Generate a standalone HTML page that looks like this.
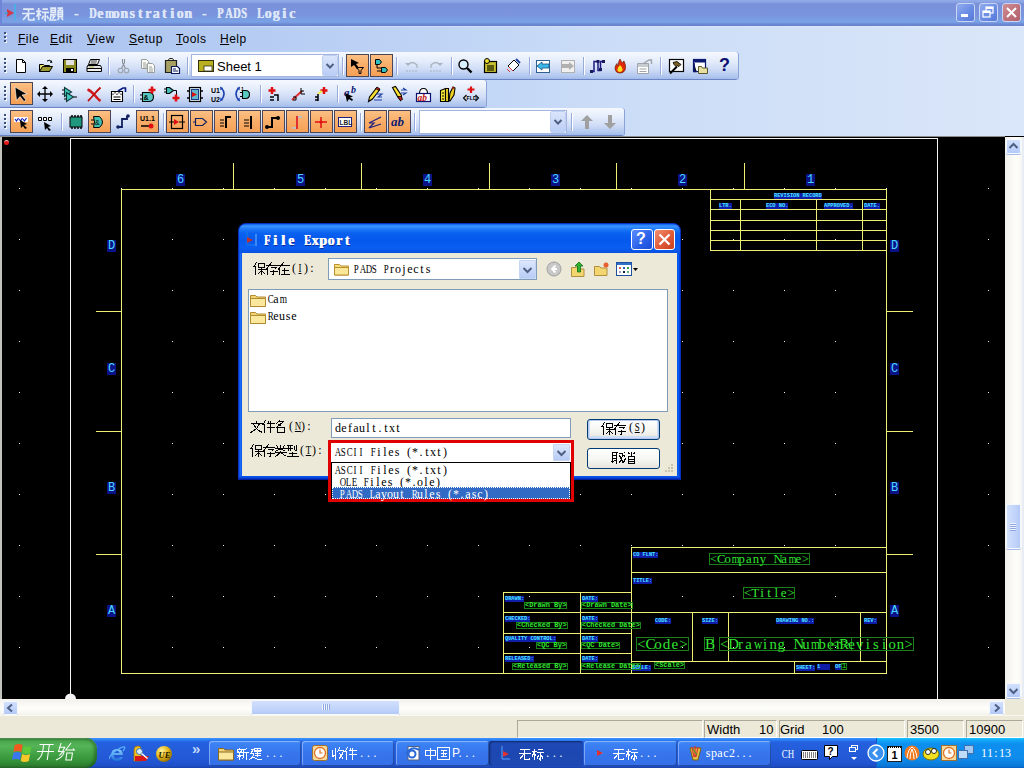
<!DOCTYPE html><html><head><meta charset="utf-8"><style>
*{margin:0;padding:0;box-sizing:border-box}
html,body{width:1024px;height:768px;overflow:hidden;background:#000;font-family:"Liberation Sans",sans-serif}
.a{position:absolute}
svg.a{overflow:visible}
.tb{height:28px;background:linear-gradient(#f5f8fe 0,#e6eefb 30%,#cfdcf6 62%,#b0c6ee 88%,#a2bbec 96%,#6a84c4 96%);border-radius:0 3px 3px 0;box-shadow:1px 0 0 #8aa2d8}
.grip{width:2px;height:2px;background:#39507a;box-shadow:1px 1px 0 #fff}
.ob{width:23px;height:23px;border:1px solid #4a4658;background:linear-gradient(#fbc084,#f8ad68 50%,#f5a056)}
.sep{width:1px;background:#97acd9;box-shadow:1px 0 0 #fff}
.mi{font-size:12px;line-height:14px;color:#000;white-space:pre;letter-spacing:.5px}
.u{text-decoration:underline}
.ms i{display:inline-block;text-align:center;font-style:normal;width:var(--p)}
.p6 i{width:6px}.p8 i{width:8px}
.ms i.n{transform:scaleX(.78)}
.p6 i.U,.p8 i.U{transform:scaleX(.74)}
.ms i.u{text-decoration:underline}
.mono{font-family:"Liberation Mono",monospace}
.lbl{font:bold 5.3px/6px "Liberation Mono",monospace;color:#48e8ff;background:#0e1ca8;white-space:pre}
.grn{font:13px/13px "Liberation Mono",monospace;color:#30e830;border:1px solid #1a801a;white-space:pre}
.grn.s{font-weight:bold}
.cy{font:12px/12px "Liberation Mono",monospace;color:#48d8ff;background:#0a1288;white-space:pre}
.sunk{border:1px solid;border-color:#a9a89c #fff #fff #a9a89c;background:#ece9d8}
.tbb{border-radius:3px;border:1px solid rgba(255,255,255,.25)}
</style></head><body><div class="a " style="left:0px;top:0px;width:1024px;height:26px;background:linear-gradient(#92ace8 0,#8aa4e6 2px,#7890d8 4px,#7a92dc 8px,#7a94dc 15px,#7a9ee2 19px,#7aa2e6 22px,#6e8ad4 24px,#6680cc 26px)"></div>
<div class="a " style="left:0px;top:0px;width:2px;height:26px;background:#6f86d8"></div>
<svg class="a" style="left:4px;top:3px;" width="16" height="18" viewBox="0 0 16 18"><path d="M11 1v16" stroke="#3fb8e8" stroke-width="1.5"/><path d="M3 6l7 4-7 4z" fill="#d23a4a"/><path d="M1 10h3" stroke="#3a9fd0" stroke-width="1.5"/></svg>
<svg class="a" style="left:22px;top:7px;" width="13" height="13" viewBox="0 0 13 13"><path d="M1 2h10M0 6h12M6 2v3M6 6l-5 6M6 6v5q0 1 1 1h4v-2" transform="scale(1.083)" fill="none" stroke="#e4ecfa" stroke-width="1.48"/></svg>
<svg class="a" style="left:36px;top:7px;" width="13" height="13" viewBox="0 0 13 13"><path d="M0 4h5M2.5 1v11M2.5 5l-2 4M2.5 5l2 3M6 2h5M5.5 5h6.5M8.5 5v7l-1-1M7 8l-1.5 3M10 8l1.5 3" transform="scale(1.083)" fill="none" stroke="#e4ecfa" stroke-width="1.48"/></svg>
<svg class="a" style="left:50px;top:7px;" width="13" height="13" viewBox="0 0 13 13"><path d="M1 1h4v4h-4zM1 3h4M0 7h6M3 7v4M3 9h2M1 8l-1 4h6M7 1h5M9.5 1v1.5M7.5 3h4v6h-4zM7.5 5h4M7.5 7h4M8.5 10l-1.5 2M10.5 10l1.5 2" transform="scale(1.083)" fill="none" stroke="#e4ecfa" stroke-width="1.48"/></svg>
<div class="a ms p8" style="left:64px;top:6px;font:bold 14px/16px 'Liberation Serif',serif;color:#dde6f8;white-space:pre;text-shadow:.6px 0 0 #dde6f8"><i>&nbsp;</i><i>-</i><i>&nbsp;</i><i class="U">D</i><i>e</i><i class="n">m</i><i>o</i><i>n</i><i>s</i><i>t</i><i>r</i><i>a</i><i>t</i><i>i</i><i>o</i><i>n</i><i>&nbsp;</i><i>-</i><i>&nbsp;</i><i class="U">P</i><i class="U">A</i><i class="U">D</i><i class="U">S</i><i>&nbsp;</i><i class="U">L</i><i>o</i><i>g</i><i>i</i><i>c</i></div>
<div class="a " style="left:956px;top:3px;width:19px;height:19px;border:1px solid #c9d5f5;border-radius:3px;background:linear-gradient(135deg,#93acef 0,#6e8fe6 50%,#5678d8 100%)"></div>
<div class="a " style="left:979px;top:3px;width:19px;height:19px;border:1px solid #c9d5f5;border-radius:3px;background:linear-gradient(135deg,#93acef 0,#6e8fe6 50%,#5678d8 100%)"></div>
<div class="a " style="left:1002px;top:3px;width:19px;height:19px;border:1px solid #c9d5f5;border-radius:3px;background:linear-gradient(135deg,#cf8e94 0,#bd6f78 60%,#b06070 100%)"></div>
<svg class="a" style="left:956px;top:3px;" width="19" height="19" viewBox="0 0 19 19"><rect x="5" y="11" width="7" height="3" fill="#fff"/></svg>
<svg class="a" style="left:979px;top:3px;" width="19" height="19" viewBox="0 0 19 19"><rect x="7" y="4" width="7" height="6" fill="none" stroke="#fff" stroke-width="1.2"/><rect x="7" y="4" width="7" height="2" fill="#fff"/><rect x="4" y="8" width="7" height="6" fill="#6f8fe4" stroke="#fff" stroke-width="1.2"/><rect x="4" y="8" width="7" height="2" fill="#fff"/></svg>
<svg class="a" style="left:1002px;top:3px;" width="19" height="19" viewBox="0 0 19 19"><path d="M5 5l9 9M14 5l-9 9" stroke="#fff" stroke-width="2"/></svg>
<div class="a " style="left:0px;top:26px;width:1024px;height:110px;background:linear-gradient(90deg,#abc2ef 0,#b3caf2 200px,#bed3f5 420px,#cadcf7 600px,#d2e1f8 800px,#dae6f9 1024px)"></div>
<div class="a " style="left:0px;top:26px;width:1024px;height:1px;background:linear-gradient(90deg,#c0d2f4,#e2ecfb)"></div>
<div class="a grip" style="left:4px;top:32px;width:2px;height:2px;"></div>
<div class="a grip" style="left:4px;top:36px;width:2px;height:2px;"></div>
<div class="a grip" style="left:4px;top:40px;width:2px;height:2px;"></div>
<div class="a mi" style="left:18px;top:32px;"><span class="u">F</span>ile</div>
<div class="a mi" style="left:50px;top:32px;"><span class="u">E</span>dit</div>
<div class="a mi" style="left:87px;top:32px;"><span class="u">V</span>iew</div>
<div class="a mi" style="left:129px;top:32px;"><span class="u">S</span>etup</div>
<div class="a mi" style="left:176px;top:32px;"><span class="u">T</span>ools</div>
<div class="a mi" style="left:220px;top:32px;"><span class="u">H</span>elp</div>
<div class="a tb" style="left:0px;top:52px;width:738px;height:28px;"></div>
<div class="a grip" style="left:4px;top:58px;width:2px;height:2px;"></div>
<div class="a grip" style="left:4px;top:62px;width:2px;height:2px;"></div>
<div class="a grip" style="left:4px;top:66px;width:2px;height:2px;"></div>
<div class="a grip" style="left:4px;top:70px;width:2px;height:2px;"></div>
<div class="a tb" style="left:0px;top:80px;width:486px;height:28px;"></div>
<div class="a grip" style="left:4px;top:86px;width:2px;height:2px;"></div>
<div class="a grip" style="left:4px;top:90px;width:2px;height:2px;"></div>
<div class="a grip" style="left:4px;top:94px;width:2px;height:2px;"></div>
<div class="a grip" style="left:4px;top:98px;width:2px;height:2px;"></div>
<div class="a tb" style="left:0px;top:108px;width:624px;height:28px;"></div>
<div class="a grip" style="left:4px;top:114px;width:2px;height:2px;"></div>
<div class="a grip" style="left:4px;top:118px;width:2px;height:2px;"></div>
<div class="a grip" style="left:4px;top:122px;width:2px;height:2px;"></div>
<div class="a grip" style="left:4px;top:126px;width:2px;height:2px;"></div>
<svg class="a" style="left:13px;top:58px;" width="16" height="16" viewBox="0 0 16 16"><path d="M3.5 1.5h6l3 3v10h-9z" fill="#fff" stroke="#000"/><path d="M9.5 1.5v3h3" fill="none" stroke="#000"/></svg>
<svg class="a" style="left:38px;top:58px;" width="16" height="16" viewBox="0 0 16 16"><path d="M1.5 6.5h4l1 1h5v6h-10z" fill="#e8e070" stroke="#000"/><path d="M1.5 13.5l3-5h10l-3 5z" fill="#9a9a30" stroke="#000"/><path d="M9 3q3-2 5 1" fill="none" stroke="#000"/><path d="M13 2l1.5 2.5-2.5.5" fill="#000"/></svg>
<svg class="a" style="left:62px;top:58px;" width="16" height="16" viewBox="0 0 16 16"><rect x="1.5" y="1.5" width="13" height="13" fill="#8a8a20" stroke="#000"/><rect x="4" y="2" width="8" height="5" fill="#e0e0e0"/><rect x="4" y="10" width="8" height="4" fill="#000"/><rect x="9" y="11" width="2" height="2" fill="#fff"/></svg>
<svg class="a" style="left:86px;top:58px;" width="16" height="16" viewBox="0 0 16 16"><path d="M4.5 1.5h9l-2 5h-9z" fill="#fff" stroke="#000"/><path d="M5 3h6M4.5 5h6" stroke="#000" stroke-width=".8"/><path d="M1.5 7.5h13l1 2v4h-14.5v-4z" fill="#e0e0e0" stroke="#000"/><path d="M1 10.5h14" stroke="#000"/><path d="M3 9h5" stroke="#c0c080" stroke-width="1.5"/><path d="M2 12h12" stroke="#fff"/></svg>
<div class="a sep" style="left:108px;top:57px;width:1px;height:18px;"></div>
<svg class="a" style="left:116px;top:58px;" width="16" height="16" viewBox="0 0 16 16"><circle cx="4.5" cy="12.5" r="2.3" fill="none" stroke="#9ca4ac" stroke-width="1.1"/><circle cx="10.5" cy="12.5" r="2.3" fill="none" stroke="#9ca4ac" stroke-width="1.1"/><path d="M5.5 10.5l3-6V1M9.5 10.5l-3-6V1" stroke="#8a929a" stroke-width="1.1" fill="none"/></svg>
<svg class="a" style="left:140px;top:58px;" width="16" height="16" viewBox="0 0 16 16"><path d="M1.5 1.5h5l2 2v7h-7z" fill="#fbfbf8" stroke="#9a9e9a"/><path d="M3 5h3M3 7h4M3 9h4" stroke="#9a9e9a"/><path d="M7.5 5.5h5l2 2v7h-7z" fill="#fbfbf8" stroke="#9a9e9a"/><path d="M9 9h3M9 11h4M9 13h4" stroke="#9a9e9a"/></svg>
<svg class="a" style="left:164px;top:58px;" width="16" height="16" viewBox="0 0 16 16"><path d="M1.5 2.5h11v12h-11z" fill="#a8a060" stroke="#202020" stroke-width="1.2"/><path d="M4 2.5l1.5-2h3l1.5 2z" fill="#f0f0d0" stroke="#202020"/><path d="M7.5 8.5h6l2 2v5h-8z" fill="#fff" stroke="#0a1a60" stroke-width="1.2"/><path d="M9 11h3M9 13h5" stroke="#0a1a60"/></svg>
<div class="a sep" style="left:187px;top:57px;width:1px;height:18px;"></div>
<div class="a " style="left:191px;top:54px;width:148px;height:23px;background:#fff;border:1px solid #a4b6e0"></div>
<svg class="a" style="left:198px;top:59px;" width="16" height="14" viewBox="0 0 16 14"><rect x=".5" y="1.5" width="15" height="11" fill="#b8b020" stroke="#303010"/><rect x="6" y="7" width="8" height="5" fill="#fff" stroke="#303010" stroke-width=".8"/></svg>
<div class="a " style="left:217px;top:59px;font-size:13px;line-height:16px;color:#000">Sheet 1</div>
<div class="a " style="left:322px;top:55px;width:16px;height:21px;background:linear-gradient(#dbe5fb,#b9cdf6);border:1px solid #c0d0f2;border-radius:2px"></div>
<svg class="a" style="left:322px;top:55px;" width="16" height="21" viewBox="0 0 16 21"><path d="M4.5 9l3.5 3.5 3.5-3.5" fill="none" stroke="#4d6185" stroke-width="2"/></svg>
<div class="a sep" style="left:342px;top:57px;width:1px;height:18px;"></div>
<div class="a ob" style="left:346px;top:54px;width:23px;height:23px;"></div>
<div class="a ob" style="left:370px;top:54px;width:23px;height:23px;"></div>
<svg class="a" style="left:349px;top:58px;" width="16" height="16" viewBox="0 0 16 16"><path d="M2 1l8 4-3 1 3 4-2 1-3-4-3 2z" fill="#000"/><path d="M7.5 9.5h7l-2.5 3v3h-2v-3z" fill="none" stroke="#000"/></svg>
<svg class="a" style="left:373px;top:58px;" width="16" height="16" viewBox="0 0 16 16"><path d="M2.5 1.5h4l2 2.5-2 2.5h-4z" fill="#30c0c0" stroke="#000"/><path d="M8.5 9.5h4l2 2.5-2 2.5h-4z" fill="#30c0c0" stroke="#000"/><path d="M4 6v4h4M4 13h4" stroke="#000" fill="none"/></svg>
<div class="a sep" style="left:396px;top:57px;width:1px;height:18px;"></div>
<svg class="a" style="left:404px;top:58px;" width="16" height="16" viewBox="0 0 16 16"><path d="M4 7q4-5 9 0v3" fill="none" stroke="#a8b4c0" stroke-width="1.3"/><path d="M1 5l3 3 2-3" fill="#a8b4c0"/><path d="M2 13h12" stroke="#a8b4c0" stroke-dasharray="2 1"/></svg>
<svg class="a" style="left:428px;top:58px;" width="16" height="16" viewBox="0 0 16 16"><path d="M12 7q-4-5-9 0v3" fill="none" stroke="#a8b4c0" stroke-width="1.3"/><path d="M15 5l-3 3-2-3" fill="#a8b4c0"/><path d="M2 13h12" stroke="#a8b4c0" stroke-dasharray="2 1"/></svg>
<div class="a sep" style="left:451px;top:57px;width:1px;height:18px;"></div>
<svg class="a" style="left:457px;top:58px;" width="16" height="16" viewBox="0 0 16 16"><circle cx="6.5" cy="6.5" r="4.5" fill="#d8f0ff" stroke="#000" stroke-width="1.4"/><path d="M10 10l4.5 4.5" stroke="#000" stroke-width="2.4"/></svg>
<svg class="a" style="left:482px;top:58px;" width="16" height="16" viewBox="0 0 16 16"><rect x="2.5" y="3.5" width="12" height="11" fill="#c8c030" stroke="#000" stroke-width="1.2"/><rect x="5" y="7" width="7" height="6" fill="#5a5a10"/><circle cx="5" cy="3" r="2.5" fill="#f0e030" stroke="#000"/></svg>
<svg class="a" style="left:505px;top:58px;" width="16" height="16" viewBox="0 0 16 16"><path d="M9 2l5 5-6 6-5-5z" fill="#fff" stroke="#000"/><path d="M4 9l4 4M2 11l3 3" stroke="#e03030"/><path d="M11 1l4 4" stroke="#2040a0" stroke-width="2"/></svg>
<div class="a sep" style="left:529px;top:57px;width:1px;height:18px;"></div>
<svg class="a" style="left:535px;top:58px;" width="16" height="16" viewBox="0 0 16 16"><rect x="1.5" y="2.5" width="13" height="12" fill="#fff" stroke="#306090"/><path d="M2 8l5-4v2h7v4h-7v2z" fill="#38b8e8" stroke="#205080" stroke-width=".8"/></svg>
<svg class="a" style="left:560px;top:58px;" width="16" height="16" viewBox="0 0 16 16"><rect x="1.5" y="2.5" width="13" height="12" fill="#f0f0f0" stroke="#b0b0b0"/><path d="M14 8l-5-4v2h-7v4h7v2z" fill="#b0b0b0"/></svg>
<div class="a sep" style="left:583px;top:57px;width:1px;height:18px;"></div>
<svg class="a" style="left:589px;top:58px;" width="16" height="16" viewBox="0 0 16 16"><path d="M2.5 13.5h2.5V3.5h4v9h2.5V3.5h3" fill="none" stroke="#1a1a80" stroke-width="1.5"/><rect x="1" y="12" width="3" height="3" fill="#1a1a60"/><rect x="7.5" y="2" width="3" height="3" fill="#1a1a60"/><rect x="10" y="10" width="3" height="3" fill="#1a1a60"/><rect x="13" y="2" width="3" height="3" fill="#1a1a60"/></svg>
<svg class="a" style="left:612px;top:58px;" width="16" height="16" viewBox="0 0 16 16"><path d="M8 1q1 3 3 4q0-2 1-2q2 4 1.5 7.5q-1 4.5-5.5 4.5t-5-4.5q0-3 2-5q0 2 1 2.5q0-4 2-7z" fill="#e02808" stroke="#601000" stroke-width=".6"/><path d="M8 7q2 2 2.5 4t-2.5 3q-3 0-2.5-3q.5-2 2.5-4z" fill="#f8e020"/></svg>
<svg class="a" style="left:636px;top:58px;" width="16" height="16" viewBox="0 0 16 16"><path d="M1.5 5.5h11v10h-11z" fill="#fff" stroke="#a0a4a8"/><path d="M2 6h10v3h-10z" fill="#c8ccd0"/><path d="M3.5 11h7M3.5 13.5h7" stroke="#a0a4a8" stroke-width="1.2"/><path d="M8 5l5-3h2.5v4" fill="none" stroke="#a0a4a8" stroke-width="1.4"/></svg>
<div class="a sep" style="left:660px;top:57px;width:1px;height:18px;"></div>
<svg class="a" style="left:668px;top:58px;" width="16" height="16" viewBox="0 0 16 16"><rect x="1.5" y="1.5" width="14" height="12" fill="#fff" stroke="#000" stroke-width="1.2"/><path d="M2 15.5l7-7" stroke="#000" stroke-width="2"/><path d="M5 4.5l4-1 4 3-2 2-2-1-1 1-2-2z" fill="#7a6020" stroke="#000" stroke-width=".8"/></svg>
<svg class="a" style="left:692px;top:58px;" width="16" height="16" viewBox="0 0 16 16"><rect x="1.5" y="1.5" width="12" height="12" fill="#fff" stroke="#0a1a70" stroke-width="1.2"/><rect x="2" y="2" width="11" height="2.5" fill="#0a1a70"/><path d="M2 5v8.5h2.5" stroke="#0a1a70" stroke-width="1.5"/><path d="M6.5 8.5h3l1 1.5h5v5.5h-9z" fill="#e8e0a0" stroke="#585830"/></svg>
<div class="a " style="left:719px;top:55px;font:bold 18px/20px 'Liberation Sans',sans-serif;color:#0a1070">?</div>
<div class="a ob" style="left:10px;top:82px;width:23px;height:23px;"></div>
<svg class="a" style="left:13px;top:86px;" width="16" height="16" viewBox="0 0 16 16"><path d="M2 1l12 7-5 1 4 5-2 1.5-4-5-3.5 4z" fill="#000" stroke="#fff" stroke-width=".6"/></svg>
<svg class="a" style="left:37px;top:86px;" width="16" height="16" viewBox="0 0 16 16"><path d="M8 1v14M1 8h14" stroke="#000" stroke-width="1.3"/><path d="M8 0l3 3h-6zM8 16l3-3h-6zM0 8l3-3v6zM16 8l-3-3v6z" fill="#000"/></svg>
<svg class="a" style="left:61px;top:86px;" width="16" height="16" viewBox="0 0 16 16"><path d="M3.5 1.5l7 4.5-7 4.5z" fill="#40c8c0" stroke="#103838" stroke-width="1.1"/><path d="M5.5 6.5l7 4.5-7 4.5z" fill="#40c8c0" stroke="#103838" stroke-width="1.1"/><path d="M12.5 11h3.5M1 4h2.5M1 8h2.5M3 13h2.5" stroke="#000"/></svg>
<svg class="a" style="left:86px;top:86px;" width="16" height="16" viewBox="0 0 16 16"><path d="M1.5 3.5q3 1 7 5.5t6 6" fill="none" stroke="#d01818" stroke-width="2.6"/><path d="M14.5 1.5q-4 4-7 7.5t-5.5 6" fill="none" stroke="#c01010" stroke-width="1.8"/></svg>
<svg class="a" style="left:110px;top:86px;" width="16" height="16" viewBox="0 0 16 16"><path d="M1.5 5.5h11v10h-11z" fill="#fff" stroke="#000" stroke-width="1.1"/><path d="M2 6h10v3h-10z" fill="#808080"/><path d="M2 6h2v1.5h-2zM6 6h2v1.5h-2zM10 6h2v1.5h-2zM4 7.5h2v1.5h-2zM8 7.5h2v1.5h-2z" fill="#fff"/><path d="M3.5 11h7M3.5 13.5h7" stroke="#000" stroke-width="1.2"/><path d="M8 5l5-3h2.5v4" fill="none" stroke="#0a1a80" stroke-width="1.6"/></svg>
<div class="a sep" style="left:133px;top:85px;width:1px;height:18px;"></div>
<svg class="a" style="left:140px;top:86px;" width="16" height="16" viewBox="0 0 16 16"><path d="M2.5 6.5h6q5 0 5 4.5t-5 4.5h-6z" fill="#58c8c0" stroke="#000" stroke-width="1.1"/><path d="M0 9h2.5M0 13h2.5" stroke="#000"/><text x="3.5" y="14" font-size="7" font-family="Liberation Sans" font-weight="bold" fill="#000">&amp;</text><path d="M12 0.5v7M8.5 4h7" stroke="#e01010" stroke-width="2.6"/></svg>
<svg class="a" style="left:164px;top:86px;" width="16" height="16" viewBox="0 0 16 16"><path d="M2.5 1.5h3l4 3-4 3h-3z" fill="#48c0b8" stroke="#000" stroke-width="1.1"/><path d="M0 3h2.5M0 6h2.5" stroke="#000"/><path d="M9.5 4.5h3v5" fill="none" stroke="#000"/><path d="M12 8.5v7M8.5 12h7" stroke="#e01010" stroke-width="2.6"/></svg>
<svg class="a" style="left:187px;top:86px;" width="16" height="16" viewBox="0 0 16 16"><rect x="2.5" y="1.5" width="11" height="14" fill="#d8ecf0" stroke="#000" stroke-width="1.2"/><rect x="4.5" y="3.5" width="7" height="10" fill="#60b8c8" stroke="#1a3a8a"/><path d="M5 6l5 2.5-5 2.5z" fill="#e01010"/><path d="M0 5h2.5M0 12h2.5M13.5 5h2.5M13.5 12h2.5" stroke="#000" stroke-width="1.5"/></svg>
<svg class="a" style="left:211px;top:86px;" width="16" height="16" viewBox="0 0 16 16"><text x="0" y="7" font-size="7" font-family="Liberation Sans" font-weight="bold" fill="#000">U1</text><text x="0" y="15.5" font-size="7" font-family="Liberation Sans" font-weight="bold" fill="#000">U2</text><path d="M10.5 2q5 5.5 0 12" fill="none" stroke="#1a40b0" stroke-width="1.6"/><path d="M9 0.5l3 1.5-2.5 2.5zM9 15.5l3-1.5-2.5-2.5z" fill="#1a40b0"/></svg>
<svg class="a" style="left:234px;top:86px;" width="16" height="16" viewBox="0 0 16 16"><path d="M8.5 4.5h3q4 0 4 4t-4 4h-3z" fill="#58c8c0" stroke="#000" stroke-width="1.1"/><path d="M6 6.5h2.5M6 10.5h2.5" stroke="#000"/><path d="M4.5 2q-5 6 0 12" fill="none" stroke="#1a40b0" stroke-width="1.6"/><path d="M6 0.5l-3 1.5 2.5 2.5zM6 15.5l-3-1.5 2.5-2.5z" fill="#1a40b0"/><text x="7" y="4.5" font-size="5" font-family="Liberation Sans" font-weight="bold" fill="#000">1</text></svg>
<div class="a sep" style="left:260px;top:85px;width:1px;height:18px;"></div>
<svg class="a" style="left:266px;top:86px;" width="16" height="16" viewBox="0 0 16 16"><path d="M6 1v7M2.5 4.5h7" stroke="#e01010" stroke-width="2.5"/><path d="M8 9h4v6M4 11h4M4 14h4" stroke="#000" stroke-width="1.5" fill="none"/></svg>
<svg class="a" style="left:290px;top:86px;" width="16" height="16" viewBox="0 0 16 16"><path d="M2 14l10-9" stroke="#e03030" stroke-width="2"/><path d="M11 2v6h4M11 5h3M3 11h3v3M3 14h3" stroke="#000" fill="none"/></svg>
<svg class="a" style="left:314px;top:86px;" width="16" height="16" viewBox="0 0 16 16"><path d="M10 1v7M6.5 4.5h7" stroke="#e01010" stroke-width="2.5"/><path d="M4 8l4-3" stroke="#f0f040" stroke-width="2"/><path d="M4 8v7M1 11h3M1 14h3" stroke="#000" stroke-width="1.5" fill="none"/></svg>
<div class="a sep" style="left:337px;top:85px;width:1px;height:18px;"></div>
<svg class="a" style="left:343px;top:86px;" width="16" height="16" viewBox="0 0 16 16"><text x="1" y="10" font-size="11" font-family="Liberation Serif" font-style="italic" font-weight="bold" fill="#0a1470">a</text><text x="8" y="7" font-size="10" font-family="Liberation Serif" font-style="italic" font-weight="bold" fill="#0a1470">b</text><path d="M2 7l2 9 2-3 3 2 1-1.5-3-2 3-1z" fill="#000"/></svg>
<svg class="a" style="left:367px;top:86px;" width="16" height="16" viewBox="0 0 16 16"><path d="M1.5 15.5l1-4.5 7-9 3 2-7 9z" fill="#f8e030" stroke="#000" stroke-width="1.1"/><path d="M8.5 2.5l1.5-1.5 3 2-1 1.5z" fill="#c02020" stroke="#000" stroke-width=".8"/><path d="M9 8h6l-4 3h4M7 14h8" fill="none" stroke="#2040a0" stroke-width="1.1"/></svg>
<svg class="a" style="left:391px;top:86px;" width="16" height="16" viewBox="0 0 16 16"><path d="M1.5 1.5l3-1 6 9-1 5-3-4z" fill="#f8e030" stroke="#000" stroke-width="1.1"/><path d="M6.5 10.5l3 4 2-1-1-3z" fill="#c02020" stroke="#000" stroke-width=".8"/><path d="M10 4h5l-3-2M10 7h5l-3 2" fill="none" stroke="#2040a0" stroke-width="1.1"/></svg>
<svg class="a" style="left:415px;top:86px;" width="16" height="16" viewBox="0 0 16 16"><path d="M4.5 7.5q0-5 4-5t4 5" fill="#fff" stroke="#000" stroke-width="1.1"/><rect x="1.5" y="7.5" width="14" height="8" fill="#fff" stroke="#0a1470" stroke-width="1.2"/><text x="2.5" y="14.5" font-size="9.5" font-family="Liberation Serif" font-style="italic" font-weight="bold" fill="#c01010">ab</text></svg>
<svg class="a" style="left:439px;top:86px;" width="16" height="16" viewBox="0 0 16 16"><path d="M1.5 4.5l5-2v13h-5z" fill="#f8e838" stroke="#000" stroke-width="1.1"/><path d="M3 7h2M3 10h2M3 13h2" stroke="#000"/><path d="M6.5 2.5h3v13h-3z" fill="#e8d028" stroke="#000" stroke-width="1.1"/><path d="M10 15l1-8 3-6 2 1-1 7-4 6z" fill="#f0d020" stroke="#000" stroke-width="1.1"/><path d="M13 1.5l2 1" stroke="#c02020" stroke-width="1.5"/></svg>
<svg class="a" style="left:463px;top:86px;" width="16" height="16" viewBox="0 0 16 16"><path d="M8 0.5v6.5M4.5 3.5h7" stroke="#e01010" stroke-width="2.2"/><path d="M3.5 9l-3 3 3 3M12.5 9l3 3-3 3" fill="none" stroke="#000" stroke-width="1.1"/><text x="3.6" y="14.2" font-size="5.2" font-family="Liberation Sans" font-weight="bold" fill="#000">FLD</text></svg>
<div class="a ob" style="left:10px;top:110px;width:23px;height:23px;"></div>
<svg class="a" style="left:13px;top:114px;" width="16" height="16" viewBox="0 0 16 16"><rect x="1" y="3" width="14" height="5" fill="#fff"/><path d="M2 5l1.5 2 2-3M6 5l1.5 2 2-3M10 5l1.5 2 2-3" stroke="#1020c0" fill="none" stroke-width="1.2"/><path d="M7 6l7 4-3 1 3 3-2 1-2-3-2 2z" fill="#000"/></svg>
<svg class="a" style="left:37px;top:114px;" width="16" height="16" viewBox="0 0 16 16"><path d="M1.5 3.5h3v3h-3zM6.5 3.5h3v3h-3zM11.5 3.5h3v3h-3z" fill="#fff" stroke="#000"/><path d="M7 8l7 4-3 1 3 3-2 1-2-3-2 2z" fill="#000"/></svg>
<div class="a sep" style="left:61px;top:113px;width:1px;height:18px;"></div>
<svg class="a" style="left:68px;top:114px;" width="16" height="16" viewBox="0 0 16 16"><rect x="2" y="3" width="12" height="10" fill="#209880" stroke="#000"/><path d="M4 1v2M7 1v2M10 1v2M13 1v2M4 13v2M7 13v2M10 13v2M13 13v2" stroke="#000" stroke-width="1.5"/></svg>
<div class="a ob" style="left:88px;top:110px;width:23px;height:23px;"></div>
<svg class="a" style="left:91px;top:114px;" width="16" height="16" viewBox="0 0 16 16"><path d="M2.5 2.5h6q6 5.5 0 11h-6q2-5.5 0-11z" fill="#40c0b0" stroke="#000"/><path d="M0 6h3M0 10h3" stroke="#000"/><text x="4" y="11" font-size="7" font-family="Liberation Sans" fill="#000">&amp;</text></svg>
<svg class="a" style="left:116px;top:114px;" width="16" height="16" viewBox="0 0 16 16"><path d="M2 13h4V5h5V2" fill="none" stroke="#102060" stroke-width="1.8"/><circle cx="2" cy="13" r="1.8" fill="#102060"/><circle cx="12" cy="2" r="1.8" fill="#102060"/></svg>
<div class="a ob" style="left:136px;top:110px;width:23px;height:23px;"></div>
<svg class="a" style="left:139px;top:114px;" width="16" height="16" viewBox="0 0 16 16"><text x="1" y="7" font-size="7" font-family="Liberation Sans" font-weight="bold" fill="#000">U1.1</text><path d="M2 12h9" stroke="#000" stroke-width="1.5"/><circle cx="12" cy="12" r="2.5" fill="#e01010"/></svg>
<div class="a sep" style="left:163px;top:113px;width:1px;height:18px;"></div>
<div class="a ob" style="left:166px;top:110px;width:23px;height:23px;"></div>
<div class="a ob" style="left:190px;top:110px;width:23px;height:23px;"></div>
<div class="a ob" style="left:214px;top:110px;width:23px;height:23px;"></div>
<div class="a ob" style="left:238px;top:110px;width:23px;height:23px;"></div>
<div class="a ob" style="left:262px;top:110px;width:23px;height:23px;"></div>
<div class="a ob" style="left:286px;top:110px;width:23px;height:23px;"></div>
<div class="a ob" style="left:310px;top:110px;width:23px;height:23px;"></div>
<div class="a ob" style="left:334px;top:110px;width:23px;height:23px;"></div>
<div class="a ob" style="left:364px;top:110px;width:23px;height:23px;"></div>
<div class="a ob" style="left:388px;top:110px;width:23px;height:23px;"></div>
<svg class="a" style="left:169px;top:114px;" width="16" height="16" viewBox="0 0 16 16"><rect x="2.5" y="1.5" width="11" height="13" fill="none" stroke="#000" stroke-width="1.2"/><path d="M5 5l5 3-5 3z" fill="#e01010"/><path d="M0 8h5M10 8h6" stroke="#000"/></svg>
<svg class="a" style="left:193px;top:114px;" width="16" height="16" viewBox="0 0 16 16"><path d="M2.5 4.5h7l4 3.5-4 3.5h-7z" fill="none" stroke="#102060" stroke-width="1.2"/><path d="M0 8h2" stroke="#102060"/></svg>
<svg class="a" style="left:217px;top:114px;" width="16" height="16" viewBox="0 0 16 16"><path d="M3 6h4M3 9h4M3 12h4" stroke="#000"/><path d="M9 14V3h5" fill="none" stroke="#000" stroke-width="2"/></svg>
<svg class="a" style="left:241px;top:114px;" width="16" height="16" viewBox="0 0 16 16"><path d="M3 6h5M3 9h5M3 12h5" stroke="#000"/><path d="M10 2v13" stroke="#000" stroke-width="2"/></svg>
<svg class="a" style="left:265px;top:114px;" width="16" height="16" viewBox="0 0 16 16"><path d="M2 13h5V4h6" fill="none" stroke="#000" stroke-width="2"/><circle cx="2" cy="13" r="2" fill="#000"/><circle cx="13" cy="4" r="2" fill="#000"/></svg>
<svg class="a" style="left:289px;top:114px;" width="16" height="16" viewBox="0 0 16 16"><path d="M8 2v13" stroke="#e03030" stroke-width="2"/><path d="M3 14h4M9 3h4" stroke="#c0c0c0" stroke-width="2"/></svg>
<svg class="a" style="left:313px;top:114px;" width="16" height="16" viewBox="0 0 16 16"><path d="M2 8h12" stroke="#e01010" stroke-width="1.5"/><path d="M8 3v11" stroke="#e01010" stroke-width="1.5"/><circle cx="8" cy="8" r="1.5" fill="#e01010"/></svg>
<svg class="a" style="left:337px;top:114px;" width="16" height="16" viewBox="0 0 16 16"><rect x="1.5" y="3.5" width="13" height="9" fill="#fff" stroke="#202080"/><text x="2.5" y="11" font-size="6.5" font-family="Liberation Sans" font-weight="bold" fill="#202020">LBL</text></svg>
<div class="a sep" style="left:360px;top:113px;width:1px;height:18px;"></div>
<svg class="a" style="left:367px;top:114px;" width="16" height="16" viewBox="0 0 16 16"><path d="M2 14l12-4M2 9l12-6M2 9h5l-5 5" fill="none" stroke="#202080" stroke-width="1.2"/></svg>
<svg class="a" style="left:391px;top:114px;" width="16" height="16" viewBox="0 0 16 16"><text x="0" y="12" font-size="13" font-family="Liberation Serif" font-style="italic" font-weight="bold" fill="#102070">ab</text></svg>
<div class="a sep" style="left:414px;top:113px;width:1px;height:18px;"></div>
<div class="a " style="left:419px;top:110px;width:148px;height:24px;background:#fff;border:1px solid #a4b6e0"></div>
<div class="a " style="left:550px;top:111px;width:16px;height:22px;background:linear-gradient(#dbe5fb,#b9cdf6);border:1px solid #c0d0f2;border-radius:2px"></div>
<svg class="a" style="left:550px;top:111px;" width="16" height="22" viewBox="0 0 16 22"><path d="M4.5 9l3.5 3.5 3.5-3.5" fill="none" stroke="#4d6185" stroke-width="2"/></svg>
<div class="a sep" style="left:571px;top:113px;width:1px;height:18px;"></div>
<svg class="a" style="left:579px;top:114px;" width="16" height="16" viewBox="0 0 16 16"><path d="M8 1l6 6h-4v8h-4v-8h-4z" fill="#a0a0a0"/></svg>
<svg class="a" style="left:602px;top:114px;" width="16" height="16" viewBox="0 0 16 16"><path d="M8 15l6-6h-4v-8h-4v8h-4z" fill="#a0a0a0"/></svg>
<div class="a " style="left:0px;top:136px;width:1005px;height:563px;background:#000"></div>
<div class="a " style="left:0px;top:136px;width:1005px;height:1px;background:#8c8c8c"></div>
<div class="a " style="left:4px;top:140px;width:5px;height:5px;background:#e81818;border-radius:50%;border-top:1px solid #f0c0c0"></div>
<div class="a " style="left:0px;top:137px;width:2px;height:562px;background:#c4c4bc"></div>
<svg class="a" style="left:0px;top:137px;" width="1005" height="562" viewBox="0 0 1005 562"><g fill="#f0f0f0"><rect x="19" y="51" width="1" height="1"/><rect x="70" y="51" width="1" height="1"/><rect x="121" y="51" width="1" height="1"/><rect x="172" y="51" width="1" height="1"/><rect x="223" y="51" width="1" height="1"/><rect x="274" y="51" width="1" height="1"/><rect x="325" y="51" width="1" height="1"/><rect x="376" y="51" width="1" height="1"/><rect x="427" y="51" width="1" height="1"/><rect x="478" y="51" width="1" height="1"/><rect x="529" y="51" width="1" height="1"/><rect x="580" y="51" width="1" height="1"/><rect x="631" y="51" width="1" height="1"/><rect x="682" y="51" width="1" height="1"/><rect x="733" y="51" width="1" height="1"/><rect x="784" y="51" width="1" height="1"/><rect x="835" y="51" width="1" height="1"/><rect x="886" y="51" width="1" height="1"/><rect x="937" y="51" width="1" height="1"/><rect x="988" y="51" width="1" height="1"/><rect x="19" y="102" width="1" height="1"/><rect x="70" y="102" width="1" height="1"/><rect x="121" y="102" width="1" height="1"/><rect x="172" y="102" width="1" height="1"/><rect x="223" y="102" width="1" height="1"/><rect x="274" y="102" width="1" height="1"/><rect x="325" y="102" width="1" height="1"/><rect x="376" y="102" width="1" height="1"/><rect x="427" y="102" width="1" height="1"/><rect x="478" y="102" width="1" height="1"/><rect x="529" y="102" width="1" height="1"/><rect x="580" y="102" width="1" height="1"/><rect x="631" y="102" width="1" height="1"/><rect x="682" y="102" width="1" height="1"/><rect x="733" y="102" width="1" height="1"/><rect x="784" y="102" width="1" height="1"/><rect x="835" y="102" width="1" height="1"/><rect x="886" y="102" width="1" height="1"/><rect x="937" y="102" width="1" height="1"/><rect x="988" y="102" width="1" height="1"/><rect x="19" y="153" width="1" height="1"/><rect x="70" y="153" width="1" height="1"/><rect x="121" y="153" width="1" height="1"/><rect x="172" y="153" width="1" height="1"/><rect x="223" y="153" width="1" height="1"/><rect x="274" y="153" width="1" height="1"/><rect x="325" y="153" width="1" height="1"/><rect x="376" y="153" width="1" height="1"/><rect x="427" y="153" width="1" height="1"/><rect x="478" y="153" width="1" height="1"/><rect x="529" y="153" width="1" height="1"/><rect x="580" y="153" width="1" height="1"/><rect x="631" y="153" width="1" height="1"/><rect x="682" y="153" width="1" height="1"/><rect x="733" y="153" width="1" height="1"/><rect x="784" y="153" width="1" height="1"/><rect x="835" y="153" width="1" height="1"/><rect x="886" y="153" width="1" height="1"/><rect x="937" y="153" width="1" height="1"/><rect x="988" y="153" width="1" height="1"/><rect x="19" y="204" width="1" height="1"/><rect x="70" y="204" width="1" height="1"/><rect x="121" y="204" width="1" height="1"/><rect x="172" y="204" width="1" height="1"/><rect x="223" y="204" width="1" height="1"/><rect x="274" y="204" width="1" height="1"/><rect x="325" y="204" width="1" height="1"/><rect x="376" y="204" width="1" height="1"/><rect x="427" y="204" width="1" height="1"/><rect x="478" y="204" width="1" height="1"/><rect x="529" y="204" width="1" height="1"/><rect x="580" y="204" width="1" height="1"/><rect x="631" y="204" width="1" height="1"/><rect x="682" y="204" width="1" height="1"/><rect x="733" y="204" width="1" height="1"/><rect x="784" y="204" width="1" height="1"/><rect x="835" y="204" width="1" height="1"/><rect x="886" y="204" width="1" height="1"/><rect x="937" y="204" width="1" height="1"/><rect x="988" y="204" width="1" height="1"/><rect x="19" y="255" width="1" height="1"/><rect x="70" y="255" width="1" height="1"/><rect x="121" y="255" width="1" height="1"/><rect x="172" y="255" width="1" height="1"/><rect x="223" y="255" width="1" height="1"/><rect x="274" y="255" width="1" height="1"/><rect x="325" y="255" width="1" height="1"/><rect x="376" y="255" width="1" height="1"/><rect x="427" y="255" width="1" height="1"/><rect x="478" y="255" width="1" height="1"/><rect x="529" y="255" width="1" height="1"/><rect x="580" y="255" width="1" height="1"/><rect x="631" y="255" width="1" height="1"/><rect x="682" y="255" width="1" height="1"/><rect x="733" y="255" width="1" height="1"/><rect x="784" y="255" width="1" height="1"/><rect x="835" y="255" width="1" height="1"/><rect x="886" y="255" width="1" height="1"/><rect x="937" y="255" width="1" height="1"/><rect x="988" y="255" width="1" height="1"/><rect x="19" y="306" width="1" height="1"/><rect x="70" y="306" width="1" height="1"/><rect x="121" y="306" width="1" height="1"/><rect x="172" y="306" width="1" height="1"/><rect x="223" y="306" width="1" height="1"/><rect x="274" y="306" width="1" height="1"/><rect x="325" y="306" width="1" height="1"/><rect x="376" y="306" width="1" height="1"/><rect x="427" y="306" width="1" height="1"/><rect x="478" y="306" width="1" height="1"/><rect x="529" y="306" width="1" height="1"/><rect x="580" y="306" width="1" height="1"/><rect x="631" y="306" width="1" height="1"/><rect x="682" y="306" width="1" height="1"/><rect x="733" y="306" width="1" height="1"/><rect x="784" y="306" width="1" height="1"/><rect x="835" y="306" width="1" height="1"/><rect x="886" y="306" width="1" height="1"/><rect x="937" y="306" width="1" height="1"/><rect x="988" y="306" width="1" height="1"/><rect x="19" y="357" width="1" height="1"/><rect x="70" y="357" width="1" height="1"/><rect x="121" y="357" width="1" height="1"/><rect x="172" y="357" width="1" height="1"/><rect x="223" y="357" width="1" height="1"/><rect x="274" y="357" width="1" height="1"/><rect x="325" y="357" width="1" height="1"/><rect x="376" y="357" width="1" height="1"/><rect x="427" y="357" width="1" height="1"/><rect x="478" y="357" width="1" height="1"/><rect x="529" y="357" width="1" height="1"/><rect x="580" y="357" width="1" height="1"/><rect x="631" y="357" width="1" height="1"/><rect x="682" y="357" width="1" height="1"/><rect x="733" y="357" width="1" height="1"/><rect x="784" y="357" width="1" height="1"/><rect x="835" y="357" width="1" height="1"/><rect x="886" y="357" width="1" height="1"/><rect x="937" y="357" width="1" height="1"/><rect x="988" y="357" width="1" height="1"/><rect x="19" y="408" width="1" height="1"/><rect x="70" y="408" width="1" height="1"/><rect x="121" y="408" width="1" height="1"/><rect x="172" y="408" width="1" height="1"/><rect x="223" y="408" width="1" height="1"/><rect x="274" y="408" width="1" height="1"/><rect x="325" y="408" width="1" height="1"/><rect x="376" y="408" width="1" height="1"/><rect x="427" y="408" width="1" height="1"/><rect x="478" y="408" width="1" height="1"/><rect x="529" y="408" width="1" height="1"/><rect x="580" y="408" width="1" height="1"/><rect x="631" y="408" width="1" height="1"/><rect x="682" y="408" width="1" height="1"/><rect x="733" y="408" width="1" height="1"/><rect x="784" y="408" width="1" height="1"/><rect x="835" y="408" width="1" height="1"/><rect x="886" y="408" width="1" height="1"/><rect x="937" y="408" width="1" height="1"/><rect x="988" y="408" width="1" height="1"/><rect x="19" y="459" width="1" height="1"/><rect x="70" y="459" width="1" height="1"/><rect x="121" y="459" width="1" height="1"/><rect x="172" y="459" width="1" height="1"/><rect x="223" y="459" width="1" height="1"/><rect x="274" y="459" width="1" height="1"/><rect x="325" y="459" width="1" height="1"/><rect x="376" y="459" width="1" height="1"/><rect x="427" y="459" width="1" height="1"/><rect x="478" y="459" width="1" height="1"/><rect x="529" y="459" width="1" height="1"/><rect x="580" y="459" width="1" height="1"/><rect x="631" y="459" width="1" height="1"/><rect x="682" y="459" width="1" height="1"/><rect x="733" y="459" width="1" height="1"/><rect x="784" y="459" width="1" height="1"/><rect x="835" y="459" width="1" height="1"/><rect x="886" y="459" width="1" height="1"/><rect x="937" y="459" width="1" height="1"/><rect x="988" y="459" width="1" height="1"/><rect x="19" y="510" width="1" height="1"/><rect x="70" y="510" width="1" height="1"/><rect x="121" y="510" width="1" height="1"/><rect x="172" y="510" width="1" height="1"/><rect x="223" y="510" width="1" height="1"/><rect x="274" y="510" width="1" height="1"/><rect x="325" y="510" width="1" height="1"/><rect x="376" y="510" width="1" height="1"/><rect x="427" y="510" width="1" height="1"/><rect x="478" y="510" width="1" height="1"/><rect x="529" y="510" width="1" height="1"/><rect x="580" y="510" width="1" height="1"/><rect x="631" y="510" width="1" height="1"/><rect x="682" y="510" width="1" height="1"/><rect x="733" y="510" width="1" height="1"/><rect x="784" y="510" width="1" height="1"/><rect x="835" y="510" width="1" height="1"/><rect x="886" y="510" width="1" height="1"/><rect x="937" y="510" width="1" height="1"/><rect x="988" y="510" width="1" height="1"/></g></svg>
<div class="a " style="left:70px;top:138px;width:868px;height:1px;background:#f4f4f4"></div>
<div class="a " style="left:70px;top:138px;width:1px;height:561px;background:#f4f4f4"></div>
<div class="a " style="left:937px;top:138px;width:1px;height:561px;background:#f4f4f4"></div>
<svg class="a" style="left:64px;top:693px;" width="13" height="6" viewBox="0 0 13 6"><path d="M1 6a5.5 5.5 0 0 1 11 0z" fill="#f4f4f4"/></svg>
<div class="a " style="left:121px;top:189px;width:766px;height:1px;background:#eeee74"></div>
<div class="a " style="left:121px;top:673px;width:766px;height:1px;background:#eeee74"></div>
<div class="a " style="left:121px;top:189px;width:1px;height:485px;background:#eeee74"></div>
<div class="a " style="left:886px;top:189px;width:1px;height:485px;background:#eeee74"></div>
<div class="a " style="left:233px;top:163px;width:1px;height:27px;background:#eeee74"></div>
<div class="a " style="left:361px;top:163px;width:1px;height:27px;background:#eeee74"></div>
<div class="a " style="left:489px;top:163px;width:1px;height:27px;background:#eeee74"></div>
<div class="a " style="left:616px;top:163px;width:1px;height:27px;background:#eeee74"></div>
<div class="a " style="left:744px;top:163px;width:1px;height:27px;background:#eeee74"></div>
<div class="a " style="left:96px;top:311px;width:26px;height:1px;background:#eeee74"></div>
<div class="a " style="left:886px;top:311px;width:27px;height:1px;background:#eeee74"></div>
<div class="a " style="left:96px;top:431px;width:26px;height:1px;background:#eeee74"></div>
<div class="a " style="left:886px;top:431px;width:27px;height:1px;background:#eeee74"></div>
<div class="a " style="left:96px;top:554px;width:26px;height:1px;background:#eeee74"></div>
<div class="a " style="left:886px;top:554px;width:27px;height:1px;background:#eeee74"></div>
<div class="a cy" style="left:176px;top:174px;width:9px;height:12px;text-align:center">6</div>
<div class="a cy" style="left:296px;top:174px;width:9px;height:12px;text-align:center">5</div>
<div class="a cy" style="left:423px;top:174px;width:9px;height:12px;text-align:center">4</div>
<div class="a cy" style="left:551px;top:174px;width:9px;height:12px;text-align:center">3</div>
<div class="a cy" style="left:678px;top:174px;width:9px;height:12px;text-align:center">2</div>
<div class="a cy" style="left:806px;top:174px;width:9px;height:12px;text-align:center">1</div>
<div class="a cy" style="left:107px;top:240px;width:9px;height:12px;text-align:center">D</div>
<div class="a cy" style="left:890px;top:240px;width:9px;height:12px;text-align:center">D</div>
<div class="a cy" style="left:107px;top:363px;width:9px;height:12px;text-align:center">C</div>
<div class="a cy" style="left:890px;top:363px;width:9px;height:12px;text-align:center">C</div>
<div class="a cy" style="left:107px;top:482px;width:9px;height:12px;text-align:center">B</div>
<div class="a cy" style="left:890px;top:482px;width:9px;height:12px;text-align:center">B</div>
<div class="a cy" style="left:107px;top:605px;width:9px;height:12px;text-align:center">A</div>
<div class="a cy" style="left:890px;top:605px;width:9px;height:12px;text-align:center">A</div>
<div class="a " style="left:710px;top:199px;width:177px;height:1px;background:#eeee74"></div>
<div class="a " style="left:710px;top:209px;width:177px;height:1px;background:#eeee74"></div>
<div class="a " style="left:710px;top:220px;width:177px;height:1px;background:#eeee74"></div>
<div class="a " style="left:710px;top:230px;width:177px;height:1px;background:#eeee74"></div>
<div class="a " style="left:710px;top:240px;width:177px;height:1px;background:#eeee74"></div>
<div class="a " style="left:710px;top:250px;width:177px;height:1px;background:#eeee74"></div>
<div class="a " style="left:710px;top:189px;width:1px;height:62px;background:#eeee74"></div>
<div class="a " style="left:740px;top:199px;width:1px;height:52px;background:#eeee74"></div>
<div class="a " style="left:816px;top:199px;width:1px;height:52px;background:#eeee74"></div>
<div class="a " style="left:862px;top:199px;width:1px;height:52px;background:#eeee74"></div>
<div class="a lbl" style="left:774px;top:193px">REVISION RECORD</div>
<div class="a lbl" style="left:719px;top:203px">LTR.</div>
<div class="a lbl" style="left:766px;top:203px">ECO NO.</div>
<div class="a lbl" style="left:824px;top:203px">APPROVED.</div>
<div class="a lbl" style="left:864px;top:203px">DATE.</div>
<div class="a " style="left:631px;top:547px;width:256px;height:1px;background:#eeee74"></div>
<div class="a " style="left:631px;top:572px;width:256px;height:1px;background:#eeee74"></div>
<div class="a " style="left:631px;top:612px;width:256px;height:1px;background:#eeee74"></div>
<div class="a " style="left:631px;top:661px;width:256px;height:1px;background:#eeee74"></div>
<div class="a " style="left:631px;top:547px;width:1px;height:127px;background:#eeee74"></div>
<div class="a " style="left:692px;top:612px;width:1px;height:50px;background:#eeee74"></div>
<div class="a " style="left:728px;top:612px;width:1px;height:50px;background:#eeee74"></div>
<div class="a " style="left:860px;top:612px;width:1px;height:50px;background:#eeee74"></div>
<div class="a " style="left:794px;top:661px;width:1px;height:13px;background:#eeee74"></div>
<div class="a " style="left:503px;top:592px;width:129px;height:1px;background:#eeee74"></div>
<div class="a " style="left:503px;top:612px;width:129px;height:1px;background:#eeee74"></div>
<div class="a " style="left:503px;top:633px;width:129px;height:1px;background:#eeee74"></div>
<div class="a " style="left:503px;top:653px;width:129px;height:1px;background:#eeee74"></div>
<div class="a " style="left:503px;top:592px;width:1px;height:82px;background:#eeee74"></div>
<div class="a " style="left:580px;top:592px;width:1px;height:82px;background:#eeee74"></div>
<div class="a lbl" style="left:633px;top:552px">CO FLNT:</div>
<div class="a lbl" style="left:633px;top:578px">TITLE:</div>
<div class="a lbl" style="left:655px;top:618px">CODE:</div>
<div class="a lbl" style="left:702px;top:618px">SIZE:</div>
<div class="a lbl" style="left:776px;top:618px">DRAWING NO.:</div>
<div class="a lbl" style="left:864px;top:618px">REV:</div>
<div class="a lbl" style="left:632px;top:665px">SCALE:</div>
<div class="a lbl" style="left:796px;top:665px">SHEET:</div>
<div class="a lbl" style="left:505px;top:596px">DRAWN:</div>
<div class="a lbl" style="left:582px;top:596px">DATE:</div>
<div class="a lbl" style="left:505px;top:616px">CHECKED:</div>
<div class="a lbl" style="left:582px;top:616px">DATE:</div>
<div class="a lbl" style="left:505px;top:636px">QUALITY CONTROL:</div>
<div class="a lbl" style="left:582px;top:636px">DATE:</div>
<div class="a lbl" style="left:505px;top:656px">RELEASED:</div>
<div class="a lbl" style="left:582px;top:656px">DATE:</div>
<div class="a grn ms" style="left:709px;top:553px;font-family:Liberation Serif,serif;font-size:12.7px;line-height:10px;--p:7.07px;"><i>&lt;</i><i class="U">C</i><i>o</i><i class="n">m</i><i>p</i><i>a</i><i>n</i><i>y</i><i>&nbsp;</i><i class="U">N</i><i>a</i><i class="n">m</i><i>e</i><i>&gt;</i></div>
<div class="a grn ms" style="left:743px;top:587px;font-family:Liberation Serif,serif;font-size:13.0px;line-height:10px;--p:7.2px;"><i>&lt;</i><i class="U">T</i><i>i</i><i>t</i><i>l</i><i>e</i><i>&gt;</i></div>
<div class="a grn ms" style="left:636px;top:637px;font-family:Liberation Serif,serif;font-size:15.1px;line-height:12px;--p:8.45px;"><i>&lt;</i><i class="U">C</i><i>o</i><i>d</i><i>e</i><i>&gt;</i></div>
<div class="a grn ms" style="left:704px;top:637px;font-family:Liberation Serif,serif;font-size:15.1px;line-height:12px;--p:8.45px;"><i class="U">B</i></div>
<div class="a grn ms" style="left:719px;top:637px;font-family:Liberation Serif,serif;font-size:14.7px;line-height:12px;--p:8.18px;"><i>&lt;</i><i class="U">D</i><i>r</i><i>a</i><i class="n">w</i><i>i</i><i>n</i><i>g</i><i>&nbsp;</i><i class="U">N</i><i>u</i><i class="n">m</i><i>b</i><i>e</i><i>r</i><i>&gt;</i></div>
<div class="a grn ms" style="left:830px;top:637px;font-family:Liberation Serif,serif;font-size:14.7px;line-height:12px;--p:8.18px;"><i>&lt;</i><i class="U">R</i><i>e</i><i>v</i><i>i</i><i>s</i><i>i</i><i>o</i><i>n</i><i>&gt;</i></div>
<div class="a grn s" style="left:654px;top:662px;font-size:6.9px;line-height:5px;">&lt;Scale&gt;</div>
<div class="a grn s" style="left:524px;top:602px;font-size:6.9px;line-height:5px;">&lt;Drawn By&gt;</div>
<div class="a grn s" style="left:581px;top:602px;font-size:6.9px;line-height:5px;">&lt;Drawn Date&gt;</div>
<div class="a grn s" style="left:516px;top:622px;font-size:6.9px;line-height:5px;">&lt;Checked By&gt;</div>
<div class="a grn s" style="left:581px;top:622px;font-size:6.9px;line-height:5px;">&lt;Checked Date&gt;</div>
<div class="a grn s" style="left:536px;top:642px;font-size:6.9px;line-height:5px;">&lt;QC By&gt;</div>
<div class="a grn s" style="left:581px;top:642px;font-size:6.9px;line-height:5px;">&lt;QC Date&gt;</div>
<div class="a grn s" style="left:512px;top:663px;font-size:6.9px;line-height:5px;">&lt;Released By&gt;</div>
<div class="a grn s" style="left:581px;top:663px;font-size:6.9px;line-height:5px;">&lt;Release Date&gt;</div>
<div class="a lbl" style="left:817px;top:664px">1   </div>
<div class="a lbl" style="left:835px;top:664px">OF</div>
<div class="a grn" style="left:841px;top:663px;font-size:6.9px;line-height:5px">1</div>
<div class="a " style="left:1005px;top:137px;width:19px;height:562px;background:linear-gradient(90deg,#f3f1ec,#fefefb 60%,#f4f3ee)"></div>
<div class="a " style="left:1022px;top:137px;width:2px;height:562px;background:#e8ecf4"></div>
<div class="a " style="left:1006px;top:139px;width:15px;height:15px;background:linear-gradient(180deg,#d2e0fd,#bfd2fa 70%,#b2c8f6);border:1px solid #f4f8ff;border-radius:2px;box-shadow:0 1px 0 #a8bce8"></div>
<svg class="a" style="left:1006px;top:139px;" width="15" height="15" viewBox="0 0 15 15"><path d="M3.5 9l4-4 4 4" fill="none" stroke="#4d6185" stroke-width="2"/></svg>
<div class="a " style="left:1006px;top:683px;width:15px;height:15px;background:linear-gradient(180deg,#d2e0fd,#bfd2fa 70%,#b2c8f6);border:1px solid #f4f8ff;border-radius:2px;box-shadow:0 1px 0 #a8bce8"></div>
<svg class="a" style="left:1006px;top:683px;" width="15" height="15" viewBox="0 0 15 15"><path d="M3.5 6l4 4 4-4" fill="none" stroke="#4d6185" stroke-width="2"/></svg>
<div class="a " style="left:1006px;top:504px;width:15px;height:45px;background:linear-gradient(90deg,#d2e0fd,#bfd2fa 70%,#b2c8f6);border:1px solid #f4f8ff;border-radius:2px;box-shadow:0 1px 0 #a8bce8"></div>
<svg class="a" style="left:1006px;top:504px;" width="15" height="45" viewBox="0 0 15 45"><path d="M4 19.5h6M4 21.5h6M4 23.5h6M4 25.5h6" stroke="#eef3fd"/><path d="M4 20.5h6M4 22.5h6M4 24.5h6M4 26.5h6" stroke="#8fa8e0"/></svg>
<div class="a " style="left:0px;top:699px;width:1005px;height:16px;background:linear-gradient(#f3f1ec,#fefefb 60%,#f4f3ee)"></div>
<div class="a " style="left:3px;top:701px;width:15px;height:14px;background:linear-gradient(180deg,#d2e0fd,#bfd2fa 70%,#b2c8f6);border:1px solid #f4f8ff;border-radius:2px;box-shadow:0 1px 0 #a8bce8"></div>
<svg class="a" style="left:3px;top:701px;" width="15" height="14" viewBox="0 0 15 14"><path d="M9 3.5l-4 3.5 4 3.5" fill="none" stroke="#4d6185" stroke-width="2"/></svg>
<div class="a " style="left:989px;top:701px;width:15px;height:14px;background:linear-gradient(180deg,#d2e0fd,#bfd2fa 70%,#b2c8f6);border:1px solid #f4f8ff;border-radius:2px;box-shadow:0 1px 0 #a8bce8"></div>
<svg class="a" style="left:989px;top:701px;" width="15" height="14" viewBox="0 0 15 14"><path d="M6 3.5l4 3.5-4 3.5" fill="none" stroke="#4d6185" stroke-width="2"/></svg>
<div class="a " style="left:251px;top:700px;width:149px;height:15px;background:linear-gradient(180deg,#d2e0fd,#bfd2fa 70%,#b2c8f6);border:1px solid #f4f8ff;border-radius:2px;box-shadow:0 1px 0 #a8bce8"></div>
<svg class="a" style="left:251px;top:700px;" width="149" height="15" viewBox="0 0 149 15"><path d="M71.5 4v6M73.5 4v6M75.5 4v6M77.5 4v6" stroke="#eef3fd"/><path d="M72.5 4v6M74.5 4v6M76.5 4v6M78.5 4v6" stroke="#8fa8e0"/></svg>
<div class="a " style="left:1005px;top:699px;width:19px;height:16px;background:#ece9d8"></div>
<div class="a " style="left:238px;top:223px;width:443px;height:257px;background:#0a3ee0;border-radius:8px 8px 0 0;border:1px solid #0831c0;border-bottom-color:#001ea0"></div>
<div class="a " style="left:239px;top:224px;width:441px;height:29px;border-radius:7px 7px 0 0;background:linear-gradient(#0a5ff0 0,#3d95ff 2px,#1e7af8 5px,#0a62f0 9px,#0558ec 16px,#0a5ef0 24px,#0850e0 29px)"></div>
<div class="a " style="left:239px;top:253px;width:3px;height:226px;background:linear-gradient(90deg,#0a4ae8,#166cf5,#0a52e8)"></div>
<div class="a " style="left:677px;top:253px;width:3px;height:226px;background:linear-gradient(90deg,#0a52e8,#0a5cf0,#0036c8)"></div>
<div class="a " style="left:239px;top:476px;width:441px;height:3px;background:linear-gradient(#0a5cf0,#0848e0,#0030b8)"></div>
<svg class="a" style="left:243px;top:231px;" width="16" height="16" viewBox="0 0 16 16"><path d="M4 1v13h8" fill="none" stroke="#1a7ae8" stroke-width="1"/><path d="M4 6l6 3-6 3z" fill="#c03030"/><path d="M13 3v12" stroke="#70b8ff"/></svg>
<div class="a ms p8" style="left:263px;top:233px;font:bold 14px/16px 'Liberation Serif',serif;color:#fff;text-shadow:.6px 0 0 #fff,1px 1px 0 #0a2a90;white-space:pre"><i class="U">F</i><i>i</i><i>l</i><i>e</i><i>&nbsp;</i><i class="U">E</i><i>x</i><i>p</i><i>o</i><i>r</i><i>t</i></div>
<div class="a " style="left:631px;top:229px;width:22px;height:21px;border:1px solid #fff;border-radius:3px;background:linear-gradient(135deg,#5a8cff,#2a60e8 60%,#1c4cd8)"></div>
<div class="a " style="left:636px;top:229px;font:bold 16px/20px 'Liberation Sans',sans-serif;color:#fff">?</div>
<div class="a " style="left:654px;top:229px;width:21px;height:21px;border:1px solid #fff;border-radius:3px;background:linear-gradient(135deg,#f09070,#e05a38 55%,#c8401f)"></div>
<svg class="a" style="left:654px;top:229px;" width="21" height="21" viewBox="0 0 21 21"><path d="M5.5 5.5l10 10M15.5 5.5l-10 10" stroke="#fff" stroke-width="2.2"/></svg>
<div class="a " style="left:242px;top:253px;width:435px;height:223px;background:#ece9d8"></div>
<svg class="a" style="left:253px;top:262px;" width="12" height="12" viewBox="0 0 12 12"><path d="M3 0l-3 5M2 3v9M5 1h6v4h-6zM4 7h8M8 5v7M8 8l-4 4M8 8l4 4" transform="translate(.5 .5)" fill="none" stroke="#000" stroke-width="1" shape-rendering="crispEdges"/></svg>
<svg class="a" style="left:265px;top:262px;" width="12" height="12" viewBox="0 0 12 12"><path d="M0 3h12M6 0l-6 8M2 6v6M5 5h6l-2 2M8 7v5l-1-.5M4 9h8" transform="translate(.5 .5)" fill="none" stroke="#000" stroke-width="1" shape-rendering="crispEdges"/></svg>
<svg class="a" style="left:277px;top:262px;" width="12" height="12" viewBox="0 0 12 12"><path d="M0 3h12M6 0l-6 8M2 6v6M7 5v7M4 8h7M3 12h9" transform="translate(.5 .5)" fill="none" stroke="#000" stroke-width="1" shape-rendering="crispEdges"/></svg>
<div class="a ms p6" style="left:291px;top:261px;font:12px/14px 'Liberation Serif',serif;color:#000;white-space:pre;"><i>(</i><i class="u U">I</i><i>)</i><i>:</i></div>
<div class="a " style="left:328px;top:258px;width:209px;height:22px;background:#fff;border:1px solid #7f9db9"></div>
<svg class="a" style="left:333px;top:262px;" width="17" height="14" viewBox="0 0 17 14"><path d="M1.5 2.5h5l1.5 1.5h7.5v9h-14z" fill="#f8dc78" stroke="#b89030"/><path d="M1.5 5.5h14v7.5h-14z" fill="#fae898" stroke="#b89030"/></svg>
<div class="a ms p6" style="left:353px;top:262px;font:12px/14px 'Liberation Serif',serif;color:#000;white-space:pre;"><i class="U">P</i><i class="U">A</i><i class="U">D</i><i class="U">S</i><i>&nbsp;</i><i class="U">P</i><i>r</i><i>o</i><i>j</i><i>e</i><i>c</i><i>t</i><i>s</i></div>
<div class="a " style="left:519px;top:260px;width:17px;height:19px;background:linear-gradient(#dde7fc,#b7cbf5);border:1px solid #c6d5f4;border-radius:1px"></div>
<svg class="a" style="left:519px;top:260px;" width="17" height="19" viewBox="0 0 17 19"><path d="M4.5 8l4 4 4-4" fill="none" stroke="#4d6185" stroke-width="2"/></svg>
<svg class="a" style="left:546px;top:261px;" width="16" height="16" viewBox="0 0 16 16"><circle cx="8" cy="8" r="7" fill="#c8c8c8" stroke="#a0a0a0"/><path d="M9.5 4.5l-3.5 3.5 3.5 3.5M6 8h5" fill="none" stroke="#fff" stroke-width="1.8"/></svg>
<svg class="a" style="left:570px;top:260px;" width="18" height="18" viewBox="0 0 18 18"><path d="M1.5 7.5h5l1.5 1.5h6v7.5h-12.5z" fill="#f4d670" stroke="#b09040"/><path d="M9 2l4 4h-2.5v6h-3v-6h-2.5z" fill="#30b030" stroke="#107010" stroke-width=".8"/></svg>
<svg class="a" style="left:593px;top:261px;" width="18" height="16" viewBox="0 0 18 16"><path d="M1.5 5.5h5l1.5 1.5h6v7.5h-12.5z" fill="#f4d670" stroke="#b09040"/><circle cx="13" cy="4" r="2.5" fill="#e86030"/></svg>
<svg class="a" style="left:616px;top:261px;" width="22" height="16" viewBox="0 0 22 16"><rect x=".5" y="1.5" width="15" height="13" fill="#fff" stroke="#2050a0"/><rect x="1" y="2" width="14" height="2" fill="#3070c8"/><rect x="3" y="6" width="2" height="2" fill="#d06060"/><rect x="7" y="6" width="2" height="2" fill="#3060c0"/><rect x="11" y="6" width="2" height="2" fill="#30a040"/><rect x="3" y="10" width="2" height="2" fill="#a0a0c0"/><rect x="7" y="10" width="2" height="2" fill="#102040"/><rect x="11" y="10" width="2" height="2" fill="#60b080"/><path d="M17 7h5l-2.5 3z" fill="#000"/></svg>
<div class="a " style="left:248px;top:289px;width:420px;height:123px;background:#fff;border:1px solid #7f9db9"></div>
<svg class="a" style="left:250px;top:293px;" width="16" height="14" viewBox="0 0 16 14"><path d="M.5 2.5h5l1.5 1.5h8.5v9.5h-15z" fill="#f4d274" stroke="#b08c30"/><path d="M.5 5.5h15v8h-15z" fill="#fbe89c" stroke="#b08c30"/></svg>
<div class="a ms p6" style="left:267px;top:292px;font:12px/14px 'Liberation Serif',serif;color:#000;white-space:pre"><i class="U">C</i><i>a</i><i class="n">m</i></div>
<svg class="a" style="left:250px;top:310px;" width="16" height="14" viewBox="0 0 16 14"><path d="M.5 2.5h5l1.5 1.5h8.5v9.5h-15z" fill="#f4d274" stroke="#b08c30"/><path d="M.5 5.5h15v8h-15z" fill="#fbe89c" stroke="#b08c30"/></svg>
<div class="a ms p6" style="left:267px;top:309px;font:12px/14px 'Liberation Serif',serif;color:#000;white-space:pre"><i class="U">R</i><i>e</i><i>u</i><i>s</i><i>e</i></div>
<svg class="a" style="left:250px;top:420px;" width="12" height="12" viewBox="0 0 12 12"><path d="M6 0v2M0 3h12M3 3q2 6 9 9M9 3q-2 6 -9 9" transform="translate(.5 .5)" fill="none" stroke="#000" stroke-width="1" shape-rendering="crispEdges"/></svg>
<svg class="a" style="left:262px;top:420px;" width="12" height="12" viewBox="0 0 12 12"><path d="M3 0l-3 5M2 3v9M6 1l-1 3M5 3h7M8 0v12M4 7h8" transform="translate(.5 .5)" fill="none" stroke="#000" stroke-width="1" shape-rendering="crispEdges"/></svg>
<svg class="a" style="left:274px;top:420px;" width="12" height="12" viewBox="0 0 12 12"><path d="M5 0l-4 4M4 1h5l-7 6M3 7h7v5h-7zM4 4l3 2" transform="translate(.5 .5)" fill="none" stroke="#000" stroke-width="1" shape-rendering="crispEdges"/></svg>
<div class="a ms p6" style="left:288px;top:419px;font:12px/14px 'Liberation Serif',serif;color:#000;white-space:pre;"><i>(</i><i class="u U">N</i><i>)</i><i>:</i></div>
<div class="a " style="left:331px;top:418px;width:240px;height:20px;background:#fff;border:1px solid #7f9db9"></div>
<div class="a ms p6" style="left:335px;top:421px;font:12px/14px 'Liberation Serif',serif;color:#000;white-space:pre;"><i>d</i><i>e</i><i>f</i><i>a</i><i>u</i><i>l</i><i>t</i><i>.</i><i>t</i><i>x</i><i>t</i></div>
<svg class="a" style="left:250px;top:444px;" width="12" height="12" viewBox="0 0 12 12"><path d="M3 0l-3 5M2 3v9M5 1h6v4h-6zM4 7h8M8 5v7M8 8l-4 4M8 8l4 4" transform="translate(.5 .5)" fill="none" stroke="#000" stroke-width="1" shape-rendering="crispEdges"/></svg>
<svg class="a" style="left:262px;top:444px;" width="12" height="12" viewBox="0 0 12 12"><path d="M0 3h12M6 0l-6 8M2 6v6M5 5h6l-2 2M8 7v5l-1-.5M4 9h8" transform="translate(.5 .5)" fill="none" stroke="#000" stroke-width="1" shape-rendering="crispEdges"/></svg>
<svg class="a" style="left:274px;top:444px;" width="12" height="12" viewBox="0 0 12 12"><path d="M2 1l1.5 2M10 1l-1.5 2M6 0v5M0 4h12M6 4l-5 3M6 4l5 3M0 8h12M6 6v2l-5 4M6 8l6 4" transform="translate(.5 .5)" fill="none" stroke="#000" stroke-width="1" shape-rendering="crispEdges"/></svg>
<svg class="a" style="left:286px;top:444px;" width="12" height="12" viewBox="0 0 12 12"><path d="M0 1h6M0 4h6M2 1v5M4 1v5M8 1v4M10 0v6l-1 -.5M6 7v4M2 9h8M0 12h12" transform="translate(.5 .5)" fill="none" stroke="#000" stroke-width="1" shape-rendering="crispEdges"/></svg>
<div class="a ms p6" style="left:299px;top:443px;font:12px/14px 'Liberation Serif',serif;color:#000;white-space:pre;"><i>(</i><i class="u U">T</i><i>)</i><i>:</i></div>
<div class="a " style="left:328px;top:440px;width:246px;height:62px;border:3px solid #e00000;background:#fff"></div>
<div class="a " style="left:331px;top:443px;width:240px;height:19px;background:#fff"></div>
<div class="a ms p6" style="left:334px;top:445px;font:12px/14px 'Liberation Serif',serif;color:#000;white-space:pre;"><i class="U">A</i><i class="U">S</i><i class="U">C</i><i class="U">I</i><i class="U">I</i><i>&nbsp;</i><i class="U">F</i><i>i</i><i>l</i><i>e</i><i>s</i><i>&nbsp;</i><i>(</i><i>*</i><i>.</i><i>t</i><i>x</i><i>t</i><i>)</i></div>
<div class="a " style="left:553px;top:444px;width:17px;height:17px;background:linear-gradient(#dde7fc,#b7cbf5);border:1px solid #c6d5f4;border-radius:1px"></div>
<svg class="a" style="left:553px;top:444px;" width="17" height="17" viewBox="0 0 17 17"><path d="M4.5 7l4 4 4-4" fill="none" stroke="#4d6185" stroke-width="2"/></svg>
<div class="a " style="left:331px;top:462px;width:240px;height:37px;background:#fff;border:1px solid #000;border-bottom:none"></div>
<div class="a ms p6" style="left:334px;top:464px;font:12px/12px 'Liberation Serif',serif;color:#000;white-space:pre;"><i class="U">A</i><i class="U">S</i><i class="U">C</i><i class="U">I</i><i class="U">I</i><i>&nbsp;</i><i class="U">F</i><i>i</i><i>l</i><i>e</i><i>s</i><i>&nbsp;</i><i>(</i><i>*</i><i>.</i><i>t</i><i>x</i><i>t</i><i>)</i></div>
<div class="a ms p6" style="left:339px;top:476px;font:12px/12px 'Liberation Serif',serif;color:#000;white-space:pre;"><i class="U">O</i><i class="U">L</i><i class="U">E</i><i>&nbsp;</i><i class="U">F</i><i>i</i><i>l</i><i>e</i><i>s</i><i>&nbsp;</i><i>(</i><i>*</i><i>.</i><i>o</i><i>l</i><i>e</i><i>)</i></div>
<div class="a " style="left:332px;top:487px;width:238px;height:12px;background:#316ac5;outline:1px dotted #fff;outline-offset:-1px"></div>
<div class="a ms p6" style="left:339px;top:488px;font:12px/12px 'Liberation Serif',serif;color:#fff;white-space:pre;"><i class="U">P</i><i class="U">A</i><i class="U">D</i><i class="U">S</i><i>&nbsp;</i><i class="U">L</i><i>a</i><i>y</i><i>o</i><i>u</i><i>t</i><i>&nbsp;</i><i class="U">R</i><i>u</i><i>l</i><i>e</i><i>s</i><i>&nbsp;</i><i>(</i><i>*</i><i>.</i><i>a</i><i>s</i><i>c</i><i>)</i></div>
<div class="a " style="left:587px;top:419px;width:73px;height:21px;border:1px solid #003c74;border-radius:3px;background:linear-gradient(#fff,#f4f4f0 60%,#e6e4dc);box-shadow:inset 0 0 0 1px #b5c8ee,inset 0 -1px 0 2px #cfdcf7"></div>
<div class="a " style="left:587px;top:448px;width:73px;height:21px;border:1px solid #003c74;border-radius:3px;background:linear-gradient(#fff,#f4f4f0 60%,#e6e4dc);"></div>
<svg class="a" style="left:601px;top:422px;" width="12" height="12" viewBox="0 0 12 12"><path d="M3 0l-3 5M2 3v9M5 1h6v4h-6zM4 7h8M8 5v7M8 8l-4 4M8 8l4 4" transform="translate(.5 .5)" fill="none" stroke="#000" stroke-width="1" shape-rendering="crispEdges"/></svg>
<svg class="a" style="left:613px;top:422px;" width="12" height="12" viewBox="0 0 12 12"><path d="M0 3h12M6 0l-6 8M2 6v6M5 5h6l-2 2M8 7v5l-1-.5M4 9h8" transform="translate(.5 .5)" fill="none" stroke="#000" stroke-width="1" shape-rendering="crispEdges"/></svg>
<div class="a ms p6" style="left:628px;top:420px;font:12px/14px 'Liberation Serif',serif;color:#000;white-space:pre;"><i>(</i><i class="u U">S</i><i>)</i></div>
<svg class="a" style="left:611px;top:451px;" width="12" height="12" viewBox="0 0 12 12"><path d="M0 1h6M1 1v10M5 1v11M1 4h4M1 7h4M0 10l6-1M7 2h4q0 6-4 10M8 4l4 8" transform="translate(.5 .5)" fill="none" stroke="#000" stroke-width="1" shape-rendering="crispEdges"/></svg>
<svg class="a" style="left:623px;top:451px;" width="12" height="12" viewBox="0 0 12 12"><path d="M1 1l1 1M0 4l2 1M0 11l2-4M8 0v4M5 1l1 2M11 1l-1 2M5 5h6v7h-6zM5 7.5h6M5 9.5h6M11 12l-1-.5" transform="translate(.5 .5)" fill="none" stroke="#000" stroke-width="1" shape-rendering="crispEdges"/></svg>
<svg class="a" style="left:664px;top:463px;" width="10" height="10" viewBox="0 0 10 10"><g fill="#c8c4b0"><rect x="7" y="1" width="2" height="2"/><rect x="4" y="4" width="2" height="2"/><rect x="7" y="4" width="2" height="2"/><rect x="1" y="7" width="2" height="2"/><rect x="4" y="7" width="2" height="2"/><rect x="7" y="7" width="2" height="2"/></g></svg>
<div class="a " style="left:0px;top:715px;width:1024px;height:23px;background:#ece9d8"></div>
<div class="a " style="left:0px;top:715px;width:1024px;height:1px;background:#f8f7f0"></div>
<div class="a " style="left:517px;top:720px;width:186px;height:18px;border:1px solid;border-color:#aca899 #fff #fff #aca899"></div>
<div class="a " style="left:704px;top:720px;width:73px;height:18px;border:1px solid;border-color:#aca899 #fff #fff #aca899"></div>
<div class="a " style="left:779px;top:720px;width:126px;height:18px;border:1px solid;border-color:#aca899 #fff #fff #aca899"></div>
<div class="a " style="left:907px;top:720px;width:57px;height:18px;border:1px solid;border-color:#aca899 #fff #fff #aca899"></div>
<div class="a " style="left:966px;top:720px;width:57px;height:18px;border:1px solid;border-color:#aca899 #fff #fff #aca899"></div>
<div class="a " style="left:707px;top:722px;font-size:13px;line-height:15px;color:#000;white-space:pre">Width</div>
<div class="a " style="left:759px;top:722px;font-size:13px;line-height:15px;color:#000;white-space:pre">10</div>
<div class="a " style="left:780px;top:722px;font-size:13px;line-height:15px;color:#000;white-space:pre">Grid</div>
<div class="a " style="left:822px;top:722px;font-size:13px;line-height:15px;color:#000;white-space:pre">100</div>
<div class="a " style="left:910px;top:722px;font-size:13px;line-height:15px;color:#000;white-space:pre">3500</div>
<div class="a " style="left:969px;top:722px;font-size:13px;line-height:15px;color:#000;white-space:pre">10900</div>
<div class="a " style="left:0px;top:738px;width:1024px;height:30px;background:linear-gradient(#3d95ff 0,#2a7ff4 2px,#2460e0 4px,#245edb 10px,#2257d5 22px,#1f4fc8 28px,#1941a5 30px)"></div>
<div class="a " style="left:0px;top:738px;width:97px;height:30px;border-radius:0 11px 11px 0;background:linear-gradient(#2f7a32 0,#4aa64c 3px,#56b458 8px,#45a447 15px,#379439 22px,#2e8230 27px,#2a6e2c 30px);box-shadow:inset -3px 0 3px rgba(0,40,0,.35),inset 0 1px 0 rgba(255,255,255,.2)"></div>
<svg class="a" style="left:10px;top:743px;" width="22" height="20" viewBox="0 0 22 20"><g transform="skewX(-10) translate(3 0)"><path d="M2 2q4-2 8 0v7q-4-2-8 0z" fill="#f05a1e"/><path d="M11 3q4 2 8 0v7q-4 2-8 0z" fill="#5cc83a"/><path d="M2 10q4-2 8 0v7q-4-2-8 0z" fill="#3a78f0"/><path d="M11 11q4 2 8 0v7q-4 2-8 0z" fill="#f8c828"/></g></svg>
<div class="a" style="left:0;top:0;transform:skewX(-8deg);transform-origin:0 752px">
<svg class="a" style="left:37px;top:743px;" width="17" height="17" viewBox="0 0 17 17"><path d="M1 1h10M0 6h12M4 1v4q0 5-3 7M8 1v11" transform="scale(1.417)" fill="none" stroke="#fff" stroke-width="0.74"/></svg>
<svg class="a" style="left:57px;top:743px;" width="17" height="17" viewBox="0 0 17 17"><path d="M2 0l-1 6h4q0 4-5 6M1 3h4q-1 4-3 6M9 0l-3 5h6l-1-1M7 7h4v5h-4zM7 12h4" transform="scale(1.417)" fill="none" stroke="#fff" stroke-width="0.74"/></svg>
</div>
<svg class="a" style="left:108px;top:745px;" width="18" height="18" viewBox="0 0 18 18"><defs><linearGradient id="ieg" x1="0" y1="0" x2="0" y2="1"><stop offset="0" stop-color="#8fd4ff"/><stop offset="1" stop-color="#1a70d8"/></linearGradient></defs><path d="M14.5 10H5.5q.3 3.5 3.5 3.5q2 0 3-1.5h3q-1.5 4-6 4q-5.5 0-6-6q.5-6 6-6q5.5 0 6 6z M5.6 8h6q-.4-2.5-3-2.5t-3 2.5z" fill="url(#ieg)" fill-rule="evenodd"/><path d="M1.5 14q-1-3 6-8t9-4q1 1-1.5 4" fill="none" stroke="#5ab0ff" stroke-width="1.2"/></svg>
<svg class="a" style="left:132px;top:745px;" width="18" height="18" viewBox="0 0 18 18"><path d="M2 16V5q0-4 4-4q3 0 3 3v12z" fill="#f0c020" stroke="#a07010" stroke-width=".8"/><path d="M3 11h14l-3 5H3z" fill="#d81818"/><circle cx="7.5" cy="6.5" r="3" fill="#d8f0ff" stroke="#4070a0"/><path d="M9.5 8.5l6 5" stroke="#fff" stroke-width="1.5"/></svg>
<svg class="a" style="left:155px;top:745px;" width="18" height="18" viewBox="0 0 18 18"><defs><radialGradient id="ueg" cx=".35" cy=".3" r=".8"><stop offset="0" stop-color="#fff4a0"/><stop offset=".5" stop-color="#e8b818"/><stop offset="1" stop-color="#806000"/></radialGradient></defs><circle cx="9" cy="9" r="8" fill="url(#ueg)"/><text x="3.5" y="12.5" font-size="8.5" font-family="Liberation Serif" font-style="italic" font-weight="bold" fill="#201800">UE</text></svg>
<div class="a " style="left:192px;top:742px;font:bold 15px/14px 'Liberation Sans',sans-serif;color:#c0d8ff">»</div>
<div class="a " style="left:209px;top:741px;width:92px;height:25px;border-radius:3px;background:linear-gradient(#4a8cf8 0,#3c82f4 3px,#3775ed 50%,#3470e8 100%);box-shadow:inset 1px 1px 0 rgba(255,255,255,.35),inset -1px -1px 0 rgba(0,0,40,.35)"></div>
<div class="a " style="left:302px;top:741px;width:92px;height:25px;border-radius:3px;background:linear-gradient(#4a8cf8 0,#3c82f4 3px,#3775ed 50%,#3470e8 100%);box-shadow:inset 1px 1px 0 rgba(255,255,255,.35),inset -1px -1px 0 rgba(0,0,40,.35)"></div>
<div class="a " style="left:396px;top:741px;width:93px;height:25px;border-radius:3px;background:linear-gradient(#4a8cf8 0,#3c82f4 3px,#3775ed 50%,#3470e8 100%);box-shadow:inset 1px 1px 0 rgba(255,255,255,.35),inset -1px -1px 0 rgba(0,0,40,.35)"></div>
<div class="a " style="left:489px;top:741px;width:94px;height:25px;border-radius:3px;background:linear-gradient(#1e4ab8,#1d47b0 50%,#1e49b4);box-shadow:inset 1px 1px 2px rgba(0,0,0,.45)"></div>
<div class="a " style="left:584px;top:741px;width:93px;height:25px;border-radius:3px;background:linear-gradient(#4a8cf8 0,#3c82f4 3px,#3775ed 50%,#3470e8 100%);box-shadow:inset 1px 1px 0 rgba(255,255,255,.35),inset -1px -1px 0 rgba(0,0,40,.35)"></div>
<div class="a " style="left:678px;top:741px;width:93px;height:25px;border-radius:3px;background:linear-gradient(#4a8cf8 0,#3c82f4 3px,#3775ed 50%,#3470e8 100%);box-shadow:inset 1px 1px 0 rgba(255,255,255,.35),inset -1px -1px 0 rgba(0,0,40,.35)"></div>
<svg class="a" style="left:218px;top:746px;" width="16" height="15" viewBox="0 0 16 15"><path d="M.5 2.5h5l1.5 1.5h8.5v10h-15z" fill="#f4d274" stroke="#8a6a20"/><path d="M.5 6h15v8h-15z" fill="#fbe89c" stroke="#8a6a20"/></svg>
<svg class="a" style="left:236px;top:747px;" width="12" height="12" viewBox="0 0 12 12"><path d="M3 0v1M0 2h6M1 3l1 2M5 3l-1 2M0 5h6M3 5v7M0 8h6M3 8l-3 3M3 8l2 2M11 1q-2 1-4 1v4q0 4-1 6M7 5h5M10 5v7" transform="translate(.5 .5)" fill="none" stroke="#fff" stroke-width="1" shape-rendering="crispEdges"/></svg>
<svg class="a" style="left:249px;top:747px;" width="12" height="12" viewBox="0 0 12 12"><path d="M5 1h6v3h-6zM4 2.5h8M8 0v9M5 6h6M5 8h6M1 2h3l-3 4h3q0 4-4 6M3 9q3 3 9 3" transform="translate(.5 .5)" fill="none" stroke="#fff" stroke-width="1" shape-rendering="crispEdges"/></svg>
<div class="a " style="left:266px;top:746px;font:12px/14px 'Liberation Sans',sans-serif;color:#fff;white-space:pre">. . .</div>
<svg class="a" style="left:312px;top:745px;" width="16" height="16" viewBox="0 0 16 16"><rect x=".5" y=".5" width="15" height="15" rx="2" fill="#f4d89c" stroke="#a07030"/><circle cx="8" cy="8" r="5.5" fill="#fff" stroke="#e07020" stroke-width="1.3"/><path d="M8 4.5v3.5h2.5" fill="none" stroke="#e07020" stroke-width="1.2"/></svg>
<svg class="a" style="left:331px;top:747px;" width="12" height="12" viewBox="0 0 12 12"><path d="M1 2v7l4-2M4 0v12M8 0l-2 5M7 3h5q-1 5-5 9M8 6l4 6" transform="translate(.5 .5)" fill="none" stroke="#fff" stroke-width="1" shape-rendering="crispEdges"/></svg>
<svg class="a" style="left:344px;top:747px;" width="12" height="12" viewBox="0 0 12 12"><path d="M3 0l-3 5M2 3v9M6 1l-1 3M5 3h7M8 0v12M4 7h8" transform="translate(.5 .5)" fill="none" stroke="#fff" stroke-width="1" shape-rendering="crispEdges"/></svg>
<div class="a " style="left:360px;top:746px;font:12px/14px 'Liberation Sans',sans-serif;color:#fff;white-space:pre">. . .</div>
<svg class="a" style="left:405px;top:745px;" width="16" height="16" viewBox="0 0 16 16"><rect x="3" y="1.5" width="11" height="13.5" fill="#fff" stroke="#506080"/><path d="M1 9q6-9 13-4" fill="none" stroke="#2a6ad8" stroke-width="2"/><circle cx="7" cy="9" r="3.5" fill="none" stroke="#2a6ad8" stroke-width="2"/></svg>
<svg class="a" style="left:424px;top:747px;" width="12" height="12" viewBox="0 0 12 12"><path d="M1 3h10v5h-10zM6 0v12" transform="translate(.5 .5)" fill="none" stroke="#fff" stroke-width="1" shape-rendering="crispEdges"/></svg>
<svg class="a" style="left:437px;top:747px;" width="12" height="12" viewBox="0 0 12 12"><path d="M0 0h12v12h-12zM3 3h6M3 6h6M3 9h6M6 3v6M8 7l1 1" transform="translate(.5 .5)" fill="none" stroke="#fff" stroke-width="1" shape-rendering="crispEdges"/></svg>
<div class="a " style="left:452px;top:746px;font:12px/14px 'Liberation Sans',sans-serif;color:#fff;white-space:pre">P. . .</div>
<svg class="a" style="left:498px;top:745px;" width="16" height="16" viewBox="0 0 16 16"><path d="M4 1v13h8" fill="none" stroke="#5aa0ff"/><path d="M5 6l6 3-6 3z" fill="#e03030"/></svg>
<svg class="a" style="left:518px;top:747px;" width="12" height="12" viewBox="0 0 12 12"><path d="M1 2h10M0 6h12M6 2v3M6 6l-5 6M6 6v5q0 1 1 1h4v-2" transform="translate(.5 .5)" fill="none" stroke="#fff" stroke-width="1" shape-rendering="crispEdges"/></svg>
<svg class="a" style="left:531px;top:747px;" width="12" height="12" viewBox="0 0 12 12"><path d="M0 4h5M2.5 1v11M2.5 5l-2 4M2.5 5l2 3M6 2h5M5.5 5h6.5M8.5 5v7l-1-1M7 8l-1.5 3M10 8l1.5 3" transform="translate(.5 .5)" fill="none" stroke="#fff" stroke-width="1" shape-rendering="crispEdges"/></svg>
<div class="a " style="left:546px;top:746px;font:12px/14px 'Liberation Sans',sans-serif;color:#fff;white-space:pre">. . .</div>
<svg class="a" style="left:592px;top:745px;" width="16" height="16" viewBox="0 0 16 16"><path d="M4 8l7 0" stroke="#5aa0ff"/><path d="M5 5l6 3-6 3z" fill="#e03030"/></svg>
<svg class="a" style="left:612px;top:747px;" width="12" height="12" viewBox="0 0 12 12"><path d="M1 2h10M0 6h12M6 2v3M6 6l-5 6M6 6v5q0 1 1 1h4v-2" transform="translate(.5 .5)" fill="none" stroke="#fff" stroke-width="1" shape-rendering="crispEdges"/></svg>
<svg class="a" style="left:625px;top:747px;" width="12" height="12" viewBox="0 0 12 12"><path d="M0 4h5M2.5 1v11M2.5 5l-2 4M2.5 5l2 3M6 2h5M5.5 5h6.5M8.5 5v7l-1-1M7 8l-1.5 3M10 8l1.5 3" transform="translate(.5 .5)" fill="none" stroke="#fff" stroke-width="1" shape-rendering="crispEdges"/></svg>
<div class="a " style="left:640px;top:746px;font:12px/14px 'Liberation Sans',sans-serif;color:#fff;white-space:pre">. . .</div>
<svg class="a" style="left:687px;top:745px;" width="16" height="16" viewBox="0 0 16 16"><path d="M3 3l3 12h5l3-12z" fill="#e0c040" stroke="#806010"/><path d="M5 2l2 10M8 1v11M11 2l-2 10" stroke="#e03030" stroke-width="1.2"/><path d="M6 4l4 6" stroke="#30a030"/></svg>
<div class="a ms p6" style="left:705px;top:746px;font:12px/14px 'Liberation Serif',serif;color:#fff;white-space:pre;"><i>s</i><i>p</i><i>a</i><i>c</i><i>2</i><i>.</i><i>.</i><i>.</i></div>
<div class="a ms p6" style="left:781px;top:747px;font:12px/14px 'Liberation Serif',serif;color:#fff"><i class="U">C</i><i class="U">H</i></div>
<svg class="a" style="left:801px;top:746px;" width="17" height="15" viewBox="0 0 17 15"><rect x=".5" y="4.5" width="16" height="9" rx="1" fill="#fff" stroke="#000"/><path d="M2 7h13M2 9h13M2 11h13" stroke="#000" stroke-dasharray="1 1"/></svg>
<svg class="a" style="left:824px;top:745px;" width="15" height="16" viewBox="0 0 15 16"><path d="M.5 .5h13v11h-5l-3 3v-3h-5z" fill="#fff" stroke="#000"/><text x="3.5" y="10" font-size="10" font-family="Liberation Sans" font-weight="bold" fill="#000">?</text></svg>
<svg class="a" style="left:848px;top:744px;" width="12" height="20" viewBox="0 0 12 20"><rect x="3.5" y="1.5" width="6" height="4" fill="none" stroke="#fff"/><rect x="1.5" y="3.5" width="6" height="4" fill="#2a6be0" stroke="#fff"/><path d="M3 13h6l-3 3z" fill="#fff"/></svg>
<div class="a " style="left:876px;top:738px;width:148px;height:30px;background:linear-gradient(#1ac8ff 0,#12a8f8 2px,#0d8ff0 6px,#0f8cec 20px,#0a78d8 28px,#0860c0 30px);box-shadow:inset 1px 0 0 #1a5ac8"></div>
<svg class="a" style="left:867px;top:743px;" width="18" height="20" viewBox="0 0 18 20"><circle cx="9" cy="10" r="8" fill="#3a90f0" stroke="#fff" stroke-width="1.3"/><path d="M10.5 6l-4 4 4 4" fill="none" stroke="#fff" stroke-width="2"/></svg>
<svg class="a" style="left:887px;top:745px;" width="15" height="17" viewBox="0 0 15 17"><rect x=".5" y="1.5" width="14" height="15" fill="#fff" stroke="#202020"/><path d="M1 2h13" stroke="#000" stroke-width="2" stroke-dasharray="1 1"/><text x="4.5" y="14" font-size="11" font-family="Liberation Sans" font-weight="bold" fill="#000">1</text></svg>
<svg class="a" style="left:904px;top:745px;" width="16" height="16" viewBox="0 0 16 16"><circle cx="8" cy="8" r="7.5" fill="#f07a20"/><path d="M3 13q1-9 5-11q4 2 5 11M6 14q0-6 2-10q2 4 2 10" fill="none" stroke="#fff" stroke-width="1"/></svg>
<svg class="a" style="left:922px;top:745px;" width="18" height="16" viewBox="0 0 18 16"><ellipse cx="9" cy="9" rx="8" ry="6" fill="#f0e020" stroke="#807000"/><circle cx="6" cy="7" r="2.5" fill="#fff" stroke="#000" stroke-width=".8"/><circle cx="12" cy="6" r="2.5" fill="#fff" stroke="#000" stroke-width=".8"/></svg>
<svg class="a" style="left:941px;top:745px;" width="16" height="16" viewBox="0 0 16 16"><rect x=".5" y=".5" width="15" height="15" fill="#f4d89c" stroke="#a07030"/><circle cx="8" cy="8" r="5.5" fill="#fff" stroke="#e07020" stroke-width="1.3"/><path d="M8 4.5v3.5h2.5" fill="none" stroke="#e07020" stroke-width="1.2"/></svg>
<svg class="a" style="left:958px;top:745px;" width="16" height="16" viewBox="0 0 16 16"><rect x="6.5" y=".5" width="9" height="8" fill="#a0c8f0" stroke="#4070b0"/><rect x=".5" y="5.5" width="9" height="8" fill="#c0dcf8" stroke="#4070b0"/><path d="M3 14v2M12 9v2" stroke="#4070b0"/></svg>
<div class="a ms p6" style="left:981px;top:746px;font:12px/14px 'Liberation Serif',serif;color:#fff;"><i>1</i><i>1</i><i>:</i><i>1</i><i>3</i></div></body></html>
